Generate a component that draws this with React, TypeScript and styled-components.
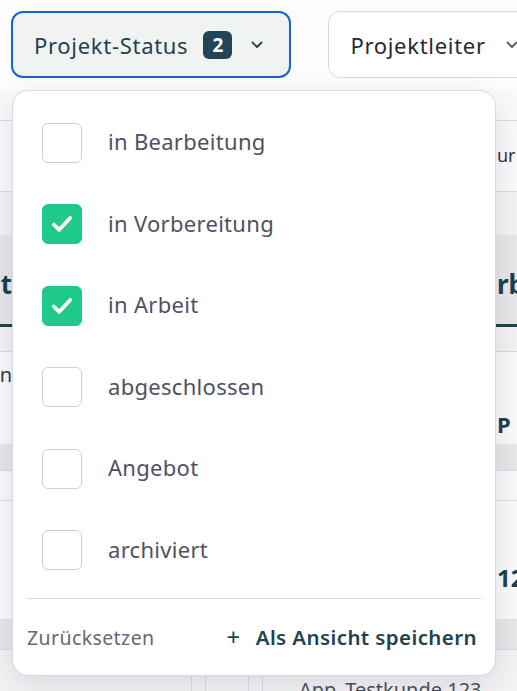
import React, { useState } from 'react'
import styled, { createGlobalStyle } from 'styled-components'

const GlobalStyle = createGlobalStyle`
	html, body {
		margin: 0;
		padding: 0;
		background: #f4f4f6;
		font-family: 'Noto Sans', 'Open Sans', sans-serif;
		overflow: hidden;
	}
`

const STATUSES = [
	{ id: 'bearbeitung', label: 'in Bearbeitung' },
	{ id: 'vorbereitung', label: 'in Vorbereitung' },
	{ id: 'arbeit', label: 'in Arbeit' },
	{ id: 'abgeschlossen', label: 'abgeschlossen' },
	{ id: 'angebot', label: 'Angebot' },
	{ id: 'archiviert', label: 'archiviert' },
]

const Page = styled.div`
	width: 517px;
	height: 691px;
	overflow: hidden;
	position: relative;
`

const Toolbar = styled.div`
	display: flex;
	gap: 37px;
	padding: 11px 0 12px 11px;
	background: #fdfdfe;
`

const FilterWrap = styled.div`
	position: relative;
	flex-shrink: 0;
`

const FilterButton = styled.button<{ $active?: boolean }>`
	display: flex;
	align-items: center;
	height: 67px;
	padding: 0 26px 0 21px;
	box-sizing: border-box;
	border-radius: 12px;
	border: ${p => (p.$active ? '2px solid #1466d2' : '1px solid #d9d8e6')};
	background: ${p => (p.$active ? '#f1f3f3' : '#ffffff')};
	color: ${p => (p.$active ? '#22404f' : '#262a33')};
	font-family: inherit;
	font-size: 22px;
	letter-spacing: 0.7px;
	white-space: nowrap;
	cursor: pointer;
`

const Badge = styled.span`
	display: inline-flex;
	align-items: center;
	justify-content: center;
	width: 29px;
	height: 28px;
	margin-left: 15px;
	border-radius: 6px;
	background: #234454;
	color: #ffffff;
	font-size: 19px;
	font-weight: 700;
	letter-spacing: 0;
`

const Chevron = styled.svg<{ $gap: number }>`
	width: 12px;
	height: 8px;
	margin-left: ${p => p.$gap}px;
	flex-shrink: 0;
`

const Dropdown = styled.div`
	position: absolute;
	top: 79px;
	left: 1px;
	width: 484px;
	box-sizing: border-box;
	background: #ffffff;
	border: 1px solid #d9d8e6;
	border-radius: 16px;
	box-shadow: 0 8px 30px rgba(30, 35, 60, 0.12);
	padding: 11px 14px 0 14px;
	z-index: 10;
`

const OptionList = styled.div`
	display: flex;
	flex-direction: column;
`

const Option = styled.label`
	display: flex;
	align-items: center;
	height: 81.5px;
	padding-left: 15px;
	gap: 26px;
	cursor: pointer;
`

const Box = styled.span<{ $checked: boolean }>`
	display: flex;
	align-items: center;
	justify-content: center;
	width: 40px;
	height: 40px;
	box-sizing: border-box;
	border-radius: 6px;
	border: 1px solid ${p => (p.$checked ? '#1fc98a' : '#cfcfd6')};
	background: ${p => (p.$checked ? '#1fc98a' : '#ffffff')};
`

const OptionText = styled.span`
	font-size: 22px;
	color: #4f5162;
	letter-spacing: 0.3px;
	margin-top: -3px;
`

const Divider = styled.div`
	height: 1px;
	background: #d9d8e6;
	margin: 7px 0 0 0;
`

const Footer = styled.div`
	display: flex;
	align-items: center;
	justify-content: space-between;
	height: 76px;
	padding: 0 4px 0 0;
`

const ResetLink = styled.button`
	border: none;
	background: none;
	padding: 0;
	font-family: inherit;
	font-size: 19.5px;
	letter-spacing: 0.4px;
	color: #656a75;
	cursor: pointer;
`

const SaveLink = styled.button`
	display: flex;
	align-items: center;
	gap: 15px;
	border: none;
	background: none;
	padding: 0;
	font-family: inherit;
	font-size: 20.5px;
	letter-spacing: 0.4px;
	font-weight: 600;
	color: #1f4250;
	cursor: pointer;
`

const Plus = styled.span`
	font-size: 24px;
	font-weight: 400;
	line-height: 1;
`

/* background board, mostly covered by the open dropdown */
const Board = styled.div`
	display: flex;
	flex-direction: column;
`

const Row = styled.div<{ $h: number; $tone?: 'gray' | 'light' | 'white'; $line?: boolean }>`
	display: grid;
	grid-template-columns: 12px 1fr 20px;
	align-items: end;
	height: ${p => p.$h}px;
	box-sizing: border-box;
	background: ${p => (p.$tone === 'gray' ? '#e7e7e9' : p.$tone === 'white' ? '#fafafb' : '#f3f3f5')};
	border-bottom: ${p => (p.$line ? '1px solid #dcdbe4' : 'none')};
	overflow: hidden;
`

const HeaderRow = styled(Row)`
	border-bottom: 3px solid #1f4350;
`

const Cell = styled.div<{ $align?: 'left' | 'right'; $bold?: boolean; $size?: number; $pb?: number }>`
	white-space: nowrap;
	overflow: hidden;
	direction: ${p => (p.$align === 'right' ? 'rtl' : 'ltr')};
	text-align: left;
	font-size: ${p => p.$size || 18}px;
	font-weight: ${p => (p.$bold ? 700 : 400)};
	color: ${p => (p.$bold ? '#1f3f4d' : '#333840')};
	padding-bottom: ${p => p.$pb || 0}px;
`

const BottomRow = styled.div`
	display: grid;
	grid-template-columns: 192px 14px 43px 14px 1fr;
	height: 42px;
	background: #f3f3f5;
`

const ColCell = styled.div`
	border-right: 1px solid #dcdbe4;
	&:last-child {
		border-right: none;
		padding: 26px 0 0 36px;
		font-size: 20px;
		color: #4a4f59;
		white-space: nowrap;
	}
`

const CheckIcon = () => (
	<svg width="22" height="18" viewBox="0 0 22 18" fill="none">
		<path d="M2.8 9.5 L8.2 14.8 L19.2 3" stroke="#ffffff" strokeWidth="3.8" strokeLinecap="round" strokeLinejoin="round" />
	</svg>
)

const ChevronIcon: React.FC<{ gap: number; color: string }> = ({ gap, color }) => (
	<Chevron $gap={gap} viewBox="0 0 12 8" fill="none">
		<path d="M1.5 1.5 L6 6 L10.5 1.5" stroke={color} strokeWidth="1.8" strokeLinecap="round" strokeLinejoin="round" />
	</Chevron>
)

const App: React.FC = () => {
	const [selected, setSelected] = useState<string[]>(['vorbereitung', 'arbeit'])

	const toggle = (id: string) =>
		setSelected(prev => (prev.includes(id) ? prev.filter(s => s !== id) : [...prev, id]))

	return (
		<Page>
			<GlobalStyle />
			<Toolbar>
				<FilterWrap>
					<FilterButton $active>
						Projekt-Status
						<Badge>{selected.length}</Badge>
						<ChevronIcon gap={19} color="#22404f" />
					</FilterButton>
					<Dropdown>
						<OptionList>
							{STATUSES.map(status => {
								const checked = selected.includes(status.id)
								return (
									<Option key={status.id} onClick={() => toggle(status.id)}>
										<Box $checked={checked}>{checked && <CheckIcon />}</Box>
										<OptionText>{status.label}</OptionText>
									</Option>
								)
							})}
						</OptionList>
						<Divider />
						<Footer>
							<ResetLink onClick={() => setSelected([])}>Zurücksetzen</ResetLink>
							<SaveLink>
								<Plus>+</Plus>
								Als Ansicht speichern
							</SaveLink>
						</Footer>
					</Dropdown>
				</FilterWrap>
				<FilterWrap>
					<FilterButton>
						Projektleiter
						<ChevronIcon gap={20} color="#555a66" />
					</FilterButton>
				</FilterWrap>
			</Toolbar>
			<Board>
				<Row $h={31} $tone="white" $line />
				<Row $h={71} $tone="white" $line>
					<Cell />
					<Cell />
					<Cell $pb={24}>ur</Cell>
				</Row>
				<Row $h={43} $tone="light" />
				<HeaderRow $h={92} $tone="gray">
					<Cell $align="right" $bold $size={26} $pb={22}>Arbeit</Cell>
					<Cell />
					<Cell $bold $size={26} $pb={22}>rbeitung</Cell>
				</HeaderRow>
				<Row $h={25} $tone="light" $line />
				<Row $h={92} $tone="white">
					<Cell $align="right" $size={20} $pb={56}>Plan</Cell>
					<Cell />
					<Cell $bold $size={22} $pb={5}>P</Cell>
				</Row>
				<Row $h={27} $tone="gray" $line />
				<Row $h={30} $tone="white" $line />
				<Row $h={118} $tone="white">
					<Cell />
					<Cell />
					<Cell $bold $size={24} $pb={25}>123</Cell>
				</Row>
				<Row $h={31} $tone="gray" $line />
				<BottomRow>
					<ColCell />
					<ColCell />
					<ColCell />
					<ColCell />
					<ColCell>App_Testkunde 123</ColCell>
				</BottomRow>
			</Board>
		</Page>
	)
}

export default App
